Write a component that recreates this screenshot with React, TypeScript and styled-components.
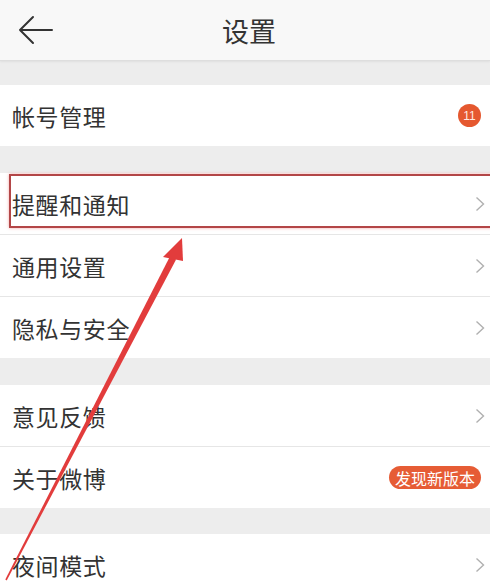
import styled, { createGlobalStyle } from "styled-components";

const GlobalStyle = createGlobalStyle`
  html, body {
    margin: 0;
    padding: 0;
    background: #ededed;
  }
  body {
    font-family: "Noto Sans CJK SC", "Noto Sans", sans-serif;
    color: #333333;
  }
`;

interface RowItem {
  label: string;
  badge?: "count" | "version";
  highlight?: boolean;
}

const SECTIONS: { gap: number; rows: RowItem[] }[] = [
  { gap: 24, rows: [{ label: "帐号管理", badge: "count" }] },
  {
    gap: 27,
    rows: [
      { label: "提醒和通知", highlight: true },
      { label: "通用设置" },
      { label: "隐私与安全" },
    ],
  },
  {
    gap: 27,
    rows: [{ label: "意见反馈" }, { label: "关于微博", badge: "version" }],
  },
  { gap: 26, rows: [{ label: "夜间模式" }] },
];

const BackIcon = () => (
  <svg width="36" height="30" viewBox="0 0 36 30">
    <path
      d="M34 15 H2 M15 2 L2 15 L15 28"
      fill="none"
      stroke="#333"
      strokeWidth="2"
      strokeLinecap="round"
      strokeLinejoin="round"
    />
  </svg>
);

const Chevron = () => (
  <svg width="10" height="16" viewBox="0 0 10 16">
    <path d="M1.5 1.5 L8.5 8 L1.5 14.5" fill="none" stroke="#b0b0b0" strokeWidth="1.4" />
  </svg>
);

const PointerArrow = () => (
  <ArrowLayer width="490" height="583" viewBox="0 0 490 583">
    <polygon
      points="176.1,259.6 169.9,256.4 5.3,579.6 6.7,580.4"
      fill="#e23c3c"
    />
    <polygon points="182,238 163,257 183,261" fill="#e23c3c" />
  </ArrowLayer>
);

export default function App() {
  return (
    <Page>
      <GlobalStyle />
      <Header>
        <BackButton>
          <BackIcon />
        </BackButton>
        <Title>设置</Title>
      </Header>
      {SECTIONS.map((section, si) => (
        <Section key={si} $gap={section.gap}>
          {section.rows.map((row) => (
            <Row key={row.label}>
              <Label>{row.label}</Label>
              {row.badge === "count" && <CountBadge>11</CountBadge>}
              {row.badge === "version" && <VersionBadge>发现新版本</VersionBadge>}
              {!row.badge && <Chevron />}
              {row.highlight && <HighlightBox />}
            </Row>
          ))}
        </Section>
      ))}
      <PointerArrow />
    </Page>
  );
}

const Page = styled.div`
  position: relative;
  width: 490px;
  height: 583px;
  overflow: hidden;
  background: #ededed;
`;

const Header = styled.header`
  position: relative;
  display: flex;
  align-items: center;
  justify-content: center;
  height: 60px;
  padding-left: 8px;
  background: #f8f8f8;
  border-bottom: 1px solid #dedede;
  box-shadow: 0 1px 2px rgba(0, 0, 0, 0.06);
`;

const BackButton = styled.div`
  position: absolute;
  left: 18px;
  top: 15px;
  display: flex;
`;

const Title = styled.h1`
  margin: 0;
  font-size: 27px;
  font-weight: 400;
  color: #333;
`;

const Section = styled.section<{ $gap: number }>`
  margin-top: ${(p) => p.$gap}px;
  background: #ffffff;
  display: flex;
  flex-direction: column;
`;

const Row = styled.div`
  position: relative;
  display: flex;
  align-items: center;
  justify-content: space-between;
  height: 61px;
  padding: 0 5px 0 12px;
  & + & {
    border-top: 1px solid #e6e6e6;
  }
`;

const Label = styled.span`
  font-size: 23px;
  color: #333;
  letter-spacing: 0.6px;
`;

const CountBadge = styled.span`
  display: flex;
  align-items: center;
  justify-content: center;
  width: 23px;
  height: 23px;
  margin-right: 4px;
  border-radius: 50%;
  background: #e5582f;
  color: #ffe9e2;
  font-family: "Liberation Sans", sans-serif;
  font-size: 12px;
`;

const VersionBadge = styled.span`
  display: flex;
  align-items: center;
  height: 23px;
  padding: 0 6px;
  margin-right: 4px;
  border-radius: 12px;
  background: #e65c35;
  color: #ffffff;
  font-size: 16px;
`;

const HighlightBox = styled.div`
  position: absolute;
  left: 9px;
  top: 1px;
  right: -6px;
  height: 50px;
  border: 2px solid #b34647;
  box-shadow: 0 0 3px rgba(235, 130, 130, 0.7);
  pointer-events: none;
`;

const ArrowLayer = styled.svg`
  position: absolute;
  left: 0;
  top: 0;
  pointer-events: none;
`;
